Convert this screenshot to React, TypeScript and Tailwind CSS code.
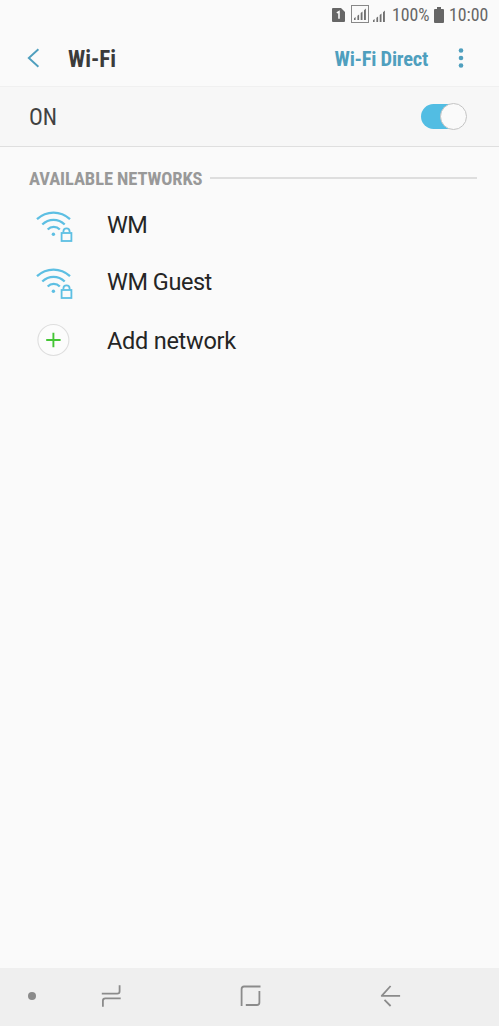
import type { ReactNode } from 'react';

const condensed = "font-['Roboto_Condensed','Roboto',sans-serif] [font-stretch:75%]";

function SignalBars({ className }: { className: string }) {
  return (
    <svg className={className} viewBox="0 0 12 12" fill="#707070">
      <path d="M0 10.2 1.6 9v3H0zM3.4 7.7l1.7-1.3V12H3.4zM6.7 5l1.8-1.4V12H6.7zM10 2.2 11.9.6V12H10z" />
    </svg>
  );
}

function StatusBar() {
  return (
    <div className={`flex h-[30px] items-center pl-[332px] text-[17.8px] leading-[30px] text-[#666] ${condensed}`}>
      <svg className="h-[14px] w-[13px] shrink-0" viewBox="0 0 13 14">
        <path d="M1 0h8l4 4v9a1 1 0 0 1-1 1H1a1 1 0 0 1-1-1V1a1 1 0 0 1 1-1z" fill="#666" />
        <path d="M4.8 4.9 7 3.7v7" fill="none" stroke="#fafafa" strokeWidth="1.6" />
      </svg>
      <div className="ml-[6px] mt-[-2px] flex h-[18px] w-[18px] shrink-0 items-end justify-center border border-[#888] pb-[2px]">
        <SignalBars className="h-[12px] w-[12px]" />
      </div>
      <SignalBars className="ml-[4px] mt-[1px] h-[12px] w-[12px] shrink-0" />
      <span className="ml-[7px] w-[39px] shrink-0 whitespace-nowrap">100%</span>
      <svg className="ml-[3px] mt-[-1px] h-[16px] w-[10px] shrink-0" viewBox="0 0 10 16" fill="#666">
        <path d="M3 0h4v2h2a1 1 0 0 1 1 1v12a1 1 0 0 1-1 1H1a1 1 0 0 1-1-1V3a1 1 0 0 1 1-1h2z" />
      </svg>
      <span className="ml-[5px] whitespace-nowrap">10:00</span>
    </div>
  );
}

function WifiLockIcon() {
  return (
    <svg className="h-[34px] w-[38px]" viewBox="0 0 38 34" fill="none" stroke="#5dbfe3" strokeWidth="2.3">
      <path d="M2 10.2C11.5 1.3 25.5 1.3 35 10.2" />
      <path d="M7.3 15.5C13.8 9.2 23.2 9.2 29.7 15.5" />
      <path d="M12.7 20.5C16 17.1 21.5 17.1 24.8 20.5" />
      <circle cx="18.4" cy="25.3" r="1.7" fill="#5dbfe3" stroke="none" />
      <rect x="26.6" y="24" width="9.8" height="8" strokeWidth="1.8" />
      <path d="M28.4 23.6v-1.2a3.1 3.1 0 0 1 6.2 0v1.2" strokeWidth="1.8" />
    </svg>
  );
}

function AddIcon() {
  return (
    <svg className="h-[34px] w-[38px]" viewBox="0 0 38 34" fill="none">
      <circle cx="18.4" cy="17" r="15.5" fill="#fcfcfc" stroke="#dedede" strokeWidth="1.1" />
      <path d="M11.2 17h14.4M18.4 9.8v14.4" stroke="#44c535" strokeWidth="1.9" />
    </svg>
  );
}

function Row({ icon, label, className, labelClassName }: { icon: ReactNode; label: string; className: string; labelClassName: string }) {
  return (
    <li className={`flex items-center pl-[35px] ${className}`}>
      {icon}
      <span className={`ml-[34px] font-[Roboto,sans-serif] text-[23.5px] leading-[28px] text-[#252525] ${labelClassName}`}>{label}</span>
    </li>
  );
}

function NavigationBar() {
  return (
    <nav className="flex h-[58px] items-center bg-[#efefef] pb-[2px] text-[#8b8b8b]">
      <span className="ml-[28px] size-[8px] rounded-full bg-[#8b8b8b]" />
      <svg className="ml-[65px] h-[24px] w-[22px]" viewBox="0 0 22 24" fill="none" stroke="currentColor" strokeWidth="1.8">
        <path d="M.8 9.6h15.4q2.4 0 2.4-2.4V1.2M1.9 22.8v-6q0-2.4 2.4-2.4h15.4" />
      </svg>
      <svg className="ml-[117px] h-[24px] w-[22px]" viewBox="0 0 22 24" fill="none" stroke="currentColor" strokeWidth="1.8">
        <path d="M1.6 22V4.9q0-2.4 2.4-2.4h16.5M19.4 7v11.5q0 2.5-2.5 2.5H5.8" />
      </svg>
      <svg className="ml-[118px] h-[24px] w-[22px]" viewBox="0 0 22 24" fill="none" stroke="currentColor" strokeWidth="1.8" strokeLinejoin="round">
        <path d="M10.6 2 1.7 11.8h18.4M4.5 15.9l6.1 6.1" />
      </svg>
    </nav>
  );
}

export default function App() {
  return (
    <div className="flex h-[1026px] w-[499px] flex-col overflow-hidden bg-[#fafafa]">
      <StatusBar />
      <header className={`flex h-[57px] items-center border-b border-[#f0f0f0] font-bold ${condensed}`}>
        <svg className="ml-[27px] h-[20px] w-[13px]" viewBox="0 0 13 20" fill="none" stroke="#4f9fbe" strokeWidth="1.9">
          <path d="M11.4 1.2 1.8 10l9.6 8.8" />
        </svg>
        <h1 className="ml-[28px] mt-[5px] text-[23px] text-[#3b3b3b]">Wi-Fi</h1>
        <span className="ml-auto mt-[3px] text-[20.5px] tracking-[-0.25px] text-[#4f9fbe]">Wi-Fi Direct</span>
        <svg className="ml-[30px] mr-[35px] h-[20px] w-[6px]" viewBox="0 0 6 20" fill="#4f9fbe">
          <circle cx="3" cy="2.5" r="2.3" />
          <circle cx="3" cy="10" r="2.3" />
          <circle cx="3" cy="17.5" r="2.3" />
        </svg>
      </header>
      <section className="flex h-[60px] items-center justify-between border-b border-[#dfdfdf] bg-[#f7f7f7] pl-[29px] pr-[32px]">
        <span className={`mt-[4px] text-[23px] text-[#414141] ${condensed}`}>ON</span>
        <div className="flex h-[25px] w-[46px] items-center justify-end rounded-full bg-[linear-gradient(to_right,#52bde3_32px,transparent_32px)]">
          <span className="size-[27px] shrink-0 rounded-full border border-[#c4c4c4] bg-[#fafafa]" />
        </div>
      </section>
      <main className="flex-1">
        <div className="flex h-[50px] items-center pl-[29px] pr-[22px] pt-[12px]">
          <h2 className={`mt-[3px] w-[181px] shrink-0 whitespace-nowrap text-[18.5px] font-bold tracking-[-0.1px] text-[#999] ${condensed}`}>AVAILABLE NETWORKS</h2>
          <span className="mt-[-1px] h-[2px] flex-1 bg-[#dedede]" />
        </div>
        <ul>
          <Row icon={<WifiLockIcon />} label="WM" className="h-[57px]" labelClassName="mt-[-1px] tracking-[-0.5px]" />
          <Row icon={<WifiLockIcon />} label="WM Guest" className="h-[57px]" labelClassName="mt-[-1px] tracking-[-0.45px]" />
          <Row icon={<AddIcon />} label="Add network" className="h-[58px]" labelClassName="mt-px tracking-[-0.25px]" />
        </ul>
      </main>
      <NavigationBar />
    </div>
  );
}
